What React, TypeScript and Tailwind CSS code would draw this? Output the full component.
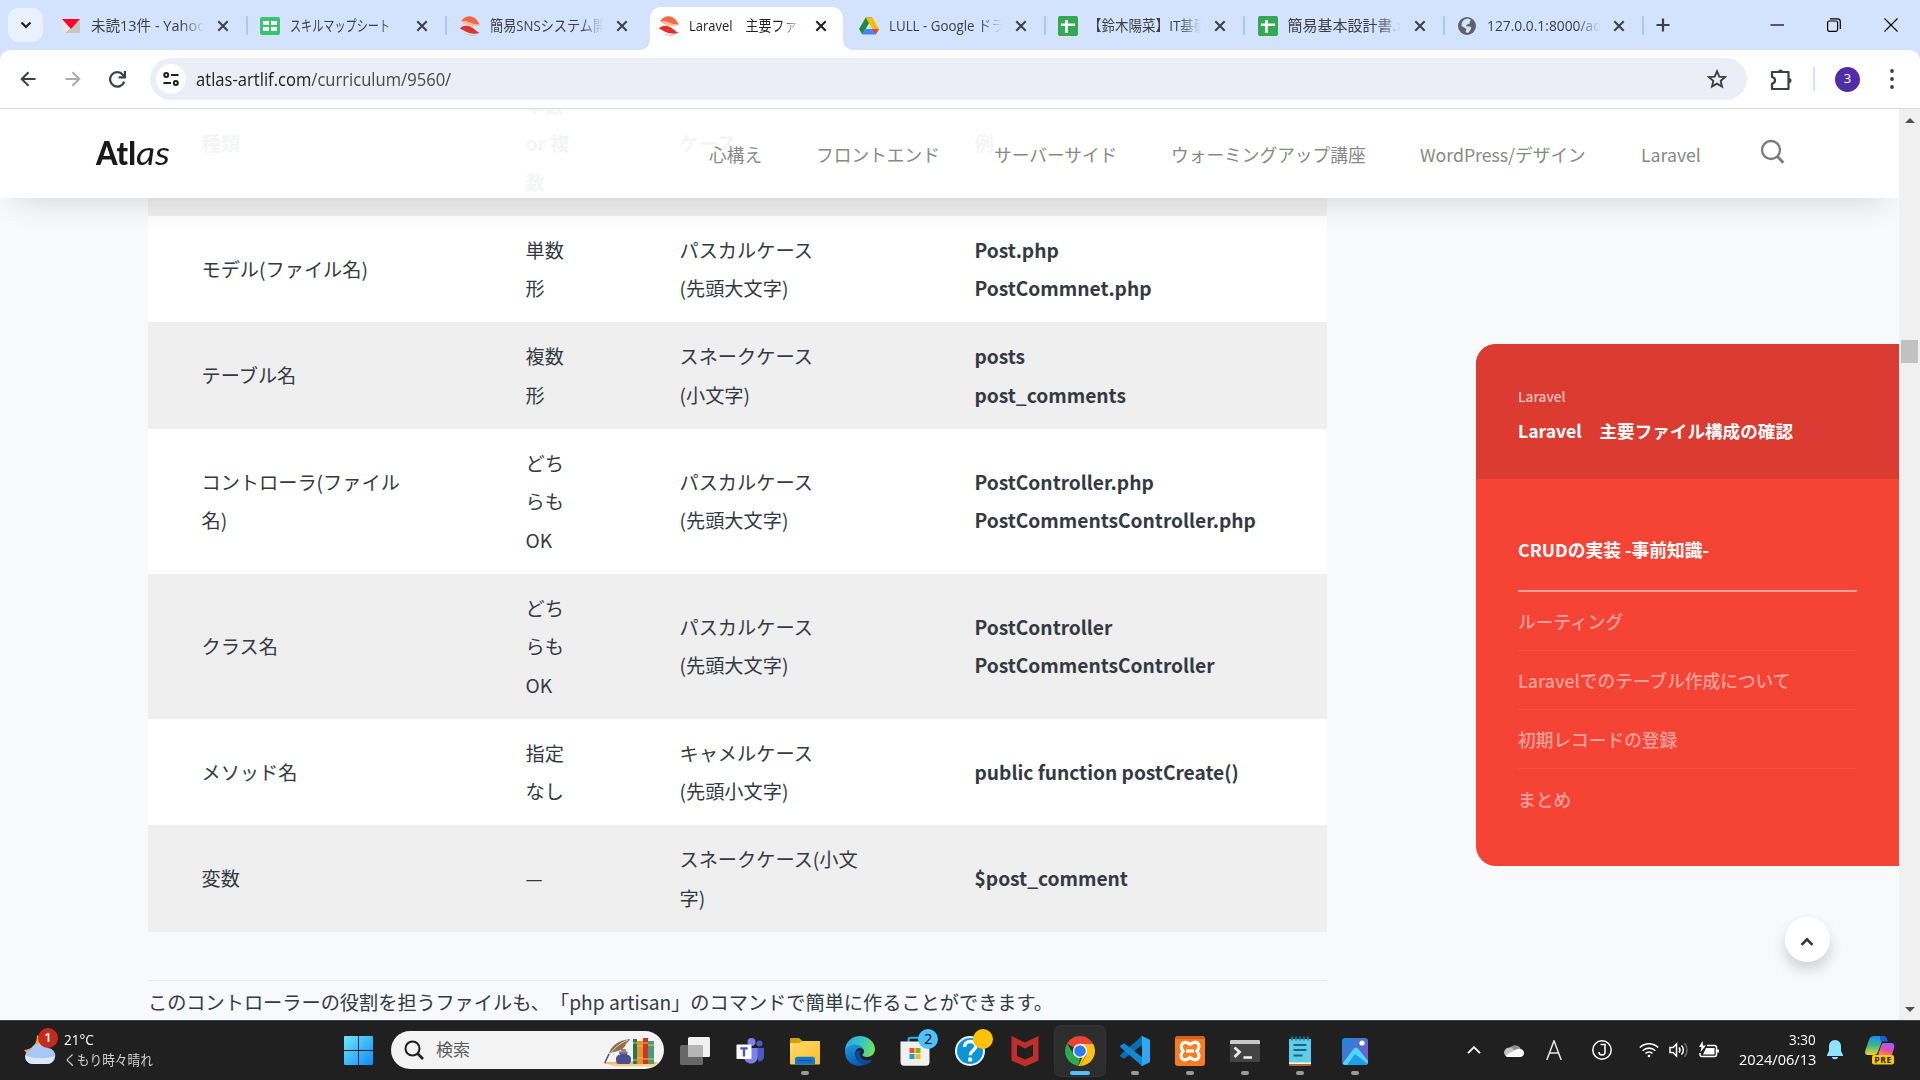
import React, { useLayoutEffect, useRef, useState } from "react";

const JP = "font-['Noto_Sans_CJK_JP',sans-serif]";
const UI = "font-['Open_Sans','Noto_Sans_CJK_JP',sans-serif]";

/* Condenses or widens a single line of text to a given advance width. */
function Fit({ w, className = "", children }: { w: number; className?: string; children: React.ReactNode }) {
  const ref = useRef<HTMLSpanElement>(null);
  const [k, setK] = useState(1);
  useLayoutEffect(() => {
    const measure = () => {
      if (ref.current) setK(w / ref.current.offsetWidth);
    };
    measure();
    document.fonts?.ready.then(measure);
  }, [w]);
  return (
    <span className="block" style={{ width: w }}>
      <span ref={ref} className={"inline-block origin-left whitespace-pre " + className} style={{ transform: `scaleX(${k})` }}>
        {children}
      </span>
    </span>
  );
}

/* ---------- Favicons ---------- */
const YahooIcon = () => (
  <svg viewBox="0 0 20 20" className="size-5">
    <path d="M1 3h18v14H1z" fill="#e9e6e0" />
    <path d="M19 4v13H4z" fill="#c9c6bf" />
    <path d="M1 3h18l-9 10z" fill="#ff0033" />
  </svg>
);
const SheetGridIcon = () => (
  <svg viewBox="0 0 20 20" className="size-5">
    <rect width="20" height="18" y="1" rx="2" fill="#37c56f" />
    <path d="M3 5h6v4H3zM11 5h6v4h-6zM3 11h6v4H3zM11 11h6v4h-6z" fill="#fff" />
  </svg>
);
const SheetPlusIcon = () => (
  <svg viewBox="0 0 20 20" className="size-5">
    <rect width="20" height="20" rx="2" fill="#34a853" />
    <path d="M7.200 4h2.600v3.400H17v2.500H9.800V17H7.200V9.900H3V7.400h4.200z" fill="#fff" />
  </svg>
);
const SushiIcon = () => (
  <svg viewBox="0 0 20 20" className="size-5">
    <path d="M3 16c4 3 9 3.500 15 1.500L15 19.500c-4 1-9 .3-12-3.500z" fill="#cfc4c0" />
    <path d="M1 5.500C4 .5 9-.5 13 1c4 1.500 5 5 7 7.500-4 .5-6-.3-9-1.500-3.500-1.500-6-1.500-10-1.500z" fill="#f26a45" />
    <path d="M1 5.500c5-.5 7 .2 10 1.500s5 2 9 1.500c-4 2-9 1.800-13 .2-2.500-1-4-2-6-3.200z" fill="#f9b79b" />
    <path d="M0 12.500C2 9.500 7 9 11 11s5.500 5 9 5.800c-5 1.700-10 1-14-1-2.300-1.200-4-2.300-6-3.300z" fill="#e2302e" />
  </svg>
);
const DriveIcon = () => (
  <svg viewBox="0 0 20 18" className="h-[18px] w-5">
    <path d="M6.700.5h6.600L6.700 12 3.300 17.500 0 12z" fill="#1e8e3e" />
    <path d="M6.700.5h6.600L20 12h-6.600z" fill="#fbbc04" />
    <path d="M3.300 17.500 6.700 12H20l-3.300 5.500z" fill="#4285f4" />
    <path d="M20 12h-6.600l3.300 5.500z" fill="#ea4335" />
  </svg>
);
const GlobeIcon = () => (
  <svg viewBox="0 0 20 20" className="size-5">
    <circle cx="10" cy="10" r="9" fill="#5f6368" />
    <path d="M8.500 3c2.500-.8 4.500 0 5.500 1l-1.500 2 .5 1.500-3 1-1 1.700 4 .3c1.200.5 1.500 1.500 1 2.500l-2.500 3.700c-1.500.3-2.500 0-3-1l1-2.700-5-3c-.2-3 1-5.800 4-7z" fill="#d3e3fd" />
  </svg>
);

const tabs = [
  { icon: <YahooIcon />, title: "未読13件 - Yahoo!", w: 119, divider: true },
  { icon: <SheetGridIcon />, title: "スキルマップシート", w: 100, divider: true },
  { icon: <SushiIcon />, title: "簡易SNSシステム開発", w: 129 },
  { icon: <SushiIcon />, title: "Laravel　主要ファイル", w: 134, active: true },
  { icon: <DriveIcon />, title: "LULL - Google ドライブ", w: 142, divider: true },
  { icon: <SheetPlusIcon />, title: "【鈴木陽菜】IT基礎", w: 119, divider: true },
  { icon: <SheetPlusIcon />, title: "簡易基本設計書.xlsx", w: 136, divider: true },
  { icon: <GlobeIcon />, title: "127.0.0.1:8000/added", w: 139, divider: true },
];

const Cross = () => (
  <svg viewBox="0 0 12 12" className="size-3" fill="none" stroke="currentColor" strokeWidth="2">
    <path d="M1.300 1.300l9.400 9.400M10.700 1.300l-9.400 9.400" />
  </svg>
);

function TabStrip() {
  return (
    <div className={"flex h-[50px] shrink-0 items-end bg-[#d3e3fd] text-[15px] text-[#3c4043] " + UI}>
      <button className="mb-2 ml-2 flex h-[34px] w-[35px] items-center justify-center rounded-[11px] bg-[#eaf1fe]">
        <svg viewBox="0 0 12 8" className="h-2 w-3" fill="none" stroke="#1f1f1f" strokeWidth="2.200">
          <path d="M1.500 1.500 6 6l4.500-4.500" />
        </svg>
      </button>
      <div className="ml-[6px] flex h-[43px]">
        {tabs.map((t, i) => (
          <div
            key={i}
            className={"relative flex h-[43px] w-[199.500px] items-center pb-[6px] pl-[11.500px] " + (t.active ? "text-[#1f1f1f]" : "")}
          >
            {t.active && (
              <svg viewBox="0 0 217 43" className="absolute top-0 -left-[9px] h-[43px] w-[215px]" preserveAspectRatio="none">
                <path d="M0 43c7 0 11-4 11-11V12C11 5 15 0 23 0h171c8 0 12 5 12 12v20c0 7 4 11 11 11z" fill="#fff" />
              </svg>
            )}
            <div className="relative flex w-5 items-center">{t.icon}</div>
            <div className="relative ml-[10px] w-[113px] overflow-hidden mask-r-from-80%">
              <Fit w={t.w}>{t.title}</Fit>
            </div>
            <div className="relative ml-[13px]">
              <Cross />
            </div>
            {t.divider && <i className="absolute top-[9px] right-px h-[19px] w-[2px] rounded bg-[#a8c7fa]" />}
          </div>
        ))}
      </div>
      <svg viewBox="0 0 14 14" className="mb-[18px] ml-[11px] size-[14px]" fill="none" stroke="#3c4043" strokeWidth="2.200">
        <path d="M7 .5v13M.5 7h13" />
      </svg>
      <div className="mr-[22px] mb-[18px] ml-auto flex items-center gap-[43px] text-black">
        <svg viewBox="0 0 14 14" className="size-[14px]" stroke="currentColor" strokeWidth="1.200">
          <path d="M.5 7H14" />
        </svg>
        <svg viewBox="0 0 14 14" className="size-[14px]" fill="none" stroke="currentColor" strokeWidth="1.200">
          <rect x=".6" y="3" width="10" height="10.300" rx="1.800" />
          <path d="M3 .9h7.500a2.800 2.800 0 0 1 2.800 2.800V11" />
        </svg>
        <svg viewBox="0 0 14 14" className="size-[14px]" fill="none" stroke="currentColor" strokeWidth="1.200">
          <path d="M.5.5l13 13M13.500.5l-13 13" />
        </svg>
      </div>
    </div>
  );
}

function Toolbar() {
  return (
    <div className="shrink-0 bg-[#d3e3fd]">
      <div className={"flex h-[59px] items-center rounded-t-[10px] border-b border-[#dcdcdc] bg-white text-[#3c4043] " + UI}>
        <svg viewBox="0 0 16 16" className="ml-5 size-4" fill="none" stroke="#3c4043" strokeWidth="2">
          <path d="M15.500 8H2M8.500 1.200 1.700 8l6.800 6.800" />
        </svg>
        <svg viewBox="0 0 16 16" className="ml-[29px] size-4" fill="none" stroke="#a9abad" strokeWidth="2">
          <path d="M.5 8H14M7.500 1.200 14.300 8l-6.800 6.800" />
        </svg>
        <svg viewBox="0 0 16 16" className="ml-[28px] size-[17px]" fill="none" stroke="#3c4043" strokeWidth="2.100">
          <path d="M14.300 10A6.800 6.800 0 1 1 13 3.500L14.500 5" />
          <path d="M15 0v6H9" />
        </svg>
        <div className="ml-6 flex h-[42px] w-[1597px] items-center rounded-full bg-[#ebeef7]">
          <div className="ml-[6px] flex size-[30px] items-center justify-center rounded-full bg-white">
            <svg viewBox="0 0 16 14" className="h-[14px] w-4" fill="none" stroke="#1f1f1f" strokeWidth="2">
              <circle cx="3.200" cy="3" r="2" />
              <path d="M8 3h7.500M.5 11H8" />
              <circle cx="12.800" cy="11" r="2" />
            </svg>
          </div>
          <div className="ml-[10px] text-[17.500px]">
            <Fit w={255}>
              <span className="text-[#202124]">atlas-artlif.com</span>
              <span className="text-[#474a4d]">/curriculum/9560/</span>
            </Fit>
          </div>
          <svg viewBox="0 0 20 20" className="mr-5 ml-auto size-5" fill="none" stroke="#3c4043" strokeWidth="1.900">
            <path d="M10 2.200l2.300 5.400 5.800.5-4.400 3.800 1.300 5.700-5-3-5 3 1.300-5.700L1.900 8.100l5.800-.5z" />
          </svg>
        </div>
        <svg viewBox="0 0 22 24" className="mb-px ml-[23px] h-6 w-[22px]" fill="none" stroke="#3c4043" strokeWidth="2.200">
          <path d="M2 5h16.500v17H2v-5.500c4-.5 4-6 0-6.500z" strokeLinejoin="round" />
          <path d="M8 4.500a2.600 2.600 0 0 1 5 0zM19 11a2.400 2.400 0 0 1 0 5z" fill="#3c4043" stroke="none" />
        </svg>
        <i className="ml-[21px] h-6 w-[2px] bg-[#d3e3fd]" />
        <div className="ml-5 flex size-[25px] items-center justify-center rounded-full bg-[#512da8] text-[13px] text-white">3</div>
        <svg viewBox="0 0 4 20" className="ml-[30px] h-[20px] w-1" fill="#3c4043">
          <circle cx="2" cy="2" r="1.900" />
          <circle cx="2" cy="10" r="1.900" />
          <circle cx="2" cy="18" r="1.900" />
        </svg>
      </div>
    </div>
  );
}

/* ---------- Page ---------- */
const navItems = [
  { t: "心構え", c: "w-[107px]" },
  { t: "フロントエンド", c: "w-[178px]" },
  { t: "サーバーサイド", c: "w-[177px]" },
  { t: "ウォーミングアップ講座", c: "w-[249px]" },
  { t: "WordPress/デザイン", c: "w-[221px]" },
  { t: "Laravel", c: "w-[120px]" },
];

function SiteHeader() {
  return (
    <header className="absolute inset-x-0 top-0 z-10 flex h-[89px] items-center bg-white/95 shadow-[0_20px_30px_-14px_rgba(0,0,0,0.12)]">
      <div className="ml-24 flex w-[613px] items-baseline pb-[3px] font-['Lato',sans-serif] text-[33px] leading-none text-[#1a1a1a]">
        <Fit w={40} className="font-black">
          Atl
        </Fit>
        <Fit w={34} className="font-normal italic">
          as
        </Fit>
      </div>
      <nav className="flex pt-px text-[17.700px] text-[#888]">
        {navItems.map((n) => (
          <a key={n.t} className={n.c + " whitespace-nowrap"}>
            {n.t}
          </a>
        ))}
      </nav>
      <svg viewBox="0 0 24 24" className="mb-[3px] size-6 overflow-visible" fill="none" stroke="#7a7a7a" strokeWidth="2.300">
        <circle cx="10" cy="10" r="9" />
        <path d="M16.500 16.500l5.800 6.200" strokeWidth="2.800" />
      </svg>
    </header>
  );
}

const rows = [
  { name: ["モデル(ファイル名)"], num: ["単数", "形"], kase: ["パスカルケース", "(先頭大文字)"], ex: ["Post.php", "PostCommnet.php"], h: "h-[106.400px]" },
  { name: ["テーブル名"], num: ["複数", "形"], kase: ["スネークケース", "(小文字)"], ex: ["posts", "post_comments"], h: "h-[106.600px]" },
  { name: ["コントローラ(ファイル", "名)"], num: ["どち", "らも", "OK"], kase: ["パスカルケース", "(先頭大文字)"], ex: ["PostController.php", "PostCommentsController.php"], h: "h-[145px]" },
  { name: ["クラス名"], num: ["どち", "らも", "OK"], kase: ["パスカルケース", "(先頭大文字)"], ex: ["PostController", "PostCommentsController"], h: "h-[145px]" },
  { name: ["メソッド名"], num: ["指定", "なし"], kase: ["キャメルケース", "(先頭小文字)"], ex: ["public function postCreate()"], h: "h-[106.400px]" },
  { name: ["変数"], num: ["—"], kase: ["スネークケース(小文", "字)"], ex: ["$post_comment"], h: "h-[106.400px]" },
];

const Lines = ({ t }: { t: string[] }) => (
  <div>
    {t.map((l) => (
      <div key={l} className="whitespace-nowrap">
        {l}
      </div>
    ))}
  </div>
);

const rowGrid = "grid grid-cols-[324px_154px_295px_1fr] items-center pl-[53.500px]";

function Article() {
  return (
    <main className="ml-[148px] w-[1179px] shrink-0 text-[19.200px] leading-[38.400px] text-[#333a42] [text-spacing-trim:space-all]">
      <div className={rowGrid + " -mt-[38px] h-[145px] bg-[#efefef] font-bold"}>
        <Lines t={["種類"]} />
        <Lines t={["単数", "or 複", "数"]} />
        <Lines t={["ケース"]} />
        <Lines t={["例"]} />
      </div>
      {rows.map((r, i) => (
        <div key={i} className={rowGrid + " " + r.h + " " + (i % 2 ? "bg-[#efefef]" : "bg-white")}>
          <Lines t={r.name} />
          <Lines t={r.num} />
          <Lines t={r.kase} />
          <div className="font-bold tracking-[-0.02px]">
            <Lines t={r.ex} />
          </div>
        </div>
      ))}
      <hr className="mt-[48px] border-[#e9ebed]" />
      <p className="mt-[2.500px] whitespace-nowrap">
        このコントローラーの役割を担うファイルも、「php artisan」のコマンドで簡単に作ることができます。
      </p>
    </main>
  );
}

function SideCard() {
  return (
    <aside className="mt-[235px] ml-[149px] h-[522px] w-[423px] shrink-0 overflow-hidden rounded-l-[20px] bg-[#f54336] text-[17.700px] font-medium text-white/50">
      <div className="h-[135px] bg-[#db3b31] px-[42px] pt-[41px]">
        <div className="text-[13.600px] leading-[22px] text-white/70">Laravel</div>
        <div className="mt-[10px] text-[17.600px] leading-7 font-bold whitespace-nowrap text-white">Laravel　主要ファイル構成の確認</div>
      </div>
      <div className="px-[42px] pt-[54px]">
        <div className="h-[59px] border-b-2 border-white/50 text-[17.760px] leading-[32px] font-bold text-white">CRUDの実装 -事前知識-</div>
        {["ルーティング", "Laravelでのテーブル作成について", "初期レコードの登録", "まとめ"].map((s) => (
          <div key={s} className="flex h-[59px] items-center border-b border-white/[0.07] pt-[1.500px] last:border-0">
            {s}
          </div>
        ))}
      </div>
    </aside>
  );
}

function Scrollbar() {
  return (
    <div className="ml-auto flex w-[21px] shrink-0 flex-col items-center bg-[#f0f0f0]">
      <svg viewBox="0 0 10 5" className="mt-[9px] h-[5px] w-[10px]">
        <path d="M0 5 5 0l5 5z" fill="#505050" />
      </svg>
      <div className="mt-[217px] h-[23px] w-[17px] bg-[#c1c1c1]" />
      <svg viewBox="0 0 10 5" className="mt-auto mb-[8px] h-[5px] w-[10px]">
        <path d="M0 0l5 5 5-5z" fill="#505050" />
      </svg>
    </div>
  );
}

/* ---------- Taskbar ---------- */
const TaskViewIcon = () => (
  <svg viewBox="0 0 32 32" className="size-8">
    <rect x="9" y="2" width="22" height="20" rx="1.500" fill="#f1f1f1" />
    <rect x="1" y="10" width="23" height="20" rx="1.500" fill="#676767" />
    <path d="M9 10h13.500c1 0 1.500.5 1.500 1.500V22H9z" fill="#b5b5b5" />
  </svg>
);
const TeamsIcon = () => (
  <svg viewBox="0 0 32 32" className="size-8">
    <circle cx="25.500" cy="8.500" r="3" fill="#4f56c5" />
    <path d="M20 13h10v8c0 4-2.500 5.500-5.500 5.500z" fill="#4f56c5" />
    <circle cx="17.500" cy="7" r="4" fill="#7b83eb" />
    <path d="M10 13h13.500v9c0 4-3 6.500-6.500 6.500S10 26 10 22z" fill="#7b83eb" />
    <rect x="2.500" y="9.500" width="15" height="14.500" rx=".8" fill="#fff" />
    <path d="M6.300 12.300h7.400v2.200h-2.500v7H8.800v-7H6.300z" fill="#4b53bc" />
  </svg>
);
const FolderIcon = () => (
  <svg viewBox="0 0 32 32" className="size-8">
    <defs>
      <linearGradient id="folder" x1="0" y1="0" x2="1" y2="1">
        <stop offset="0" stopColor="#ffdc6e" />
        <stop offset="1" stopColor="#fdbd2c" />
      </linearGradient>
    </defs>
    <path d="M1 4.500C1 3.500 1.500 3 2.500 3H10l3.500 3H31v6H1z" fill="#dd9f00" />
    <path d="M1 8h9l3.500-2H29.500c1 0 1.500.5 1.500 1.500V28c0 1-.5 1.500-1.500 1.500h-27C1.500 29.500 1 29 1 28z" fill="url(#folder)" />
    <path d="M6 29.500V24a2.200 2.200 0 0 1 2.200-2.200h15.600A2.200 2.200 0 0 1 26 24v5.500z" fill="#1278cf" />
    <path d="M9.500 25.500h13" stroke="#0b4f94" strokeWidth="1.200" />
  </svg>
);
const EdgeIcon = () => (
  <svg viewBox="0 0 32 32" className="size-8">
    <defs>
      <linearGradient id="edgeTop" x1="0" y1="0.300" x2="1" y2="0.600">
        <stop offset="0" stopColor="#2fa9dc" />
        <stop offset=".5" stopColor="#37c6c4" />
        <stop offset="1" stopColor="#74e05c" />
      </linearGradient>
      <linearGradient id="edgeBase" x1="0" y1="0" x2="0.400" y2="1">
        <stop offset="0" stopColor="#1c9de0" />
        <stop offset="1" stopColor="#0a5cb5" />
      </linearGradient>
    </defs>
    <path d="M1 16C1 7 8 1 16 1s15 6 15 13c0 5-4 8-8 8-3 0-5-1-4.500-2.500C20 18 20 17 20 16c0-2-3-5-8-5-6 0-10 3-11 5z" fill="url(#edgeTop)" />
    <path d="M1 16c1-4 5-6.500 9.500-6.500 6 0 9.500 4 9.500 6.500 0-1-2-3-4-3-4 0-6 5-4 10 1.500 4 6 6 10 5.500C14 34 1 29.500 1 16z" fill="url(#edgeBase)" />
    <path d="M12 17.500c-1 6 3 12 9 12 3 0 6-2.500 7.500-5.500-4 2.500-10 1.500-12-2.500-.8-2-.5-4 .5-5.500-2-1-4.500-.5-5 1.500z" fill="#0c4a97" />
  </svg>
);
const StoreIcon = () => (
  <svg viewBox="0 0 32 32" className="size-8">
    <path d="M9.500 8V4.500C9.500 3 10 2.700 11.500 2.700H21" fill="none" stroke="#2bb3f0" strokeWidth="2" />
    <path d="M1.500 6.500h29V27c0 2-1 3.800-3.500 3.800H5C2.500 30.800 1.500 29 1.500 27z" fill="#f0f0f0" />
    <path d="M10.500 13h5v5h-5z" fill="#f25022" />
    <path d="M16.500 13h5v5h-5z" fill="#7fba00" />
    <path d="M10.500 19h5v5h-5z" fill="#00a4ef" />
    <path d="M16.500 19h5v5h-5z" fill="#ffb900" />
  </svg>
);
const HelpIcon = () => (
  <svg viewBox="0 0 32 32" className="size-8">
    <circle cx="16" cy="16" r="14" fill="#0b95d9" stroke="#e9f6fd" strokeWidth="2" />
    <path d="M10.500 12c0-3.500 2.500-5.500 5.700-5.500 3.300 0 5.600 2 5.600 4.700 0 4-5.600 4.600-5.600 9" fill="none" stroke="#fff" strokeWidth="3.400" />
    <circle cx="16.100" cy="24.500" r="2.200" fill="#fff" />
  </svg>
);
const ShieldIcon = () => (
  <svg viewBox="0 0 32 32" className="size-8">
    <path d="M2.500 1 16 7.500 29.500 1v24.500L16 31.500 2.500 25.500z" fill="#c12d2b" />
    <path d="M8 9.500l8 4 8-4V21l-8 3.500L8 21z" fill="#202020" />
  </svg>
);
const ChromeIcon = () => (
  <svg viewBox="0 0 32 32" className="size-8">
    <path d="M16 16 3 8.500A15 15 0 0 1 29 8.500z" fill="#ea4335" />
    <path d="M16 9h13.300A15 15 0 0 1 16 31l6.500-11.500z" fill="#fbc116" />
    <path d="M3 8.500 9.800 19.500 16 23l-1.500 7.900A15 15 0 0 1 3 8.500z" fill="#2da94f" />
    <path d="M14.500 30.900 18 22.800l4.200-3.200L16 31z" fill="#fbc116" />
    <circle cx="16" cy="16" r="7.200" fill="#fff" />
    <circle cx="16" cy="16" r="5.800" fill="#2f7cf0" />
  </svg>
);
const CodeIcon = () => (
  <svg viewBox="0 0 32 32" className="size-8">
    <path d="M23 1v9L5 23.800 1.500 21.500c-.5-.5-.5-1.200 0-1.700z" fill="#0a6db8" />
    <path d="M1.500 10.500 5 8.200 23 22v9L1.500 12.200c-.5-.5-.5-1.200 0-1.700z" fill="#1487d4" />
    <path d="M23 1l7 3.300c.6.300 1 .8 1 1.500v20.400c0 .7-.4 1.200-1 1.500L23 31c-.8.200-1.200 0-1.500-.3.800.4 1.500 0 1.500-1V2.300c0-1-.7-1.400-1.500-1 .3-.3.700-.5 1.500-.3z" fill="#2fa8f2" />
  </svg>
);
const XamppIcon = () => (
  <svg viewBox="0 0 32 32" className="size-8">
    <rect x="1" y="1" width="30" height="30" rx="3" fill="#f97b22" />
    <path d="M1 4a3 3 0 0 1 3-3h24a3 3 0 0 1 3 3z" fill="#d9601a" />
    <path d="M9 8c3-2 5 0 7 1.500C18 8 21 6 23.500 8s1.500 5.500-.5 8c2 2.500 3 6 .5 8S18 24 16 22.500C14 24 11 26 8.500 24S7 18.500 9 16C7 13.500 6.500 10 9 8z" fill="none" stroke="#fff" strokeWidth="3.200" />
    <path d="M12 16h8" stroke="#fff" strokeWidth="3.200" />
  </svg>
);
const TerminalIcon = () => (
  <svg viewBox="0 0 32 32" className="size-8">
    <rect x="1" y="5" width="30" height="22" rx="1.500" fill="#444" />
    <path d="M1 9V6.500C1 5.500 1.500 5 2.500 5h27c1 0 1.500.5 1.500 1.500V9z" fill="#c9c9c9" />
    <path d="M5.500 12.500l5 4.500-5 5" fill="none" stroke="#e8e8e8" strokeWidth="2.800" />
    <path d="M14.500 22.500h8.500" stroke="#fff" strokeWidth="2.400" />
  </svg>
);
const NotepadIcon = () => (
  <svg viewBox="0 0 32 32" className="size-8">
    <rect x="5" y="26" width="22" height="5" rx="1" fill="#b9642a" />
    <path d="M5 4h22v24H5z" fill="#64cbe6" />
    <path d="M5 27.500h22V29H5z" fill="#fff" />
    <path d="M9.500 10h13M9.500 15h13M9.500 20.500h9" stroke="#0b6a8c" strokeWidth="2" />
    <path d="M8 1.500v4M12 1.500v4M16 1.500v4M20 1.500v4M24 1.500v4" stroke="#12809f" strokeWidth="1.800" />
  </svg>
);
const PhotosIcon = () => (
  <svg viewBox="0 0 32 32" className="size-8">
    <defs>
      <linearGradient id="sky" x1="0" y1="0" x2="1" y2="1">
        <stop offset="0" stopColor="#1789dc" />
        <stop offset="1" stopColor="#8e55c4" />
      </linearGradient>
    </defs>
    <rect x="3" y="3" width="26" height="27" rx="3" fill="url(#sky)" />
    <path d="M4 28 14.500 14c1.500-2 3.500-2 5 0L29 26c0 3-1 4-3 4H6c-1 0-2-1-2-2z" fill="#4fd6f8" />
    <path d="M16 19 28.500 28.500C28 29.500 27 30 26 30H8z" fill="#1e9de8" />
    <circle cx="23" cy="8" r="2.600" fill="#fff" />
  </svg>
);

const apps: { icon: React.ReactNode; dot?: boolean; active?: boolean; badge?: React.ReactNode }[] = [
  { icon: <TaskViewIcon /> },
  { icon: <TeamsIcon /> },
  { icon: <FolderIcon />, dot: true },
  { icon: <EdgeIcon /> },
  {
    icon: <StoreIcon />,
    badge: (
      <b className="absolute top-[3px] right-[2px] flex size-5 items-center justify-center rounded-full bg-[#4cc2ff] text-[14px] font-normal text-black">2</b>
    ),
  },
  { icon: <HelpIcon />, badge: <b className="absolute top-[3px] right-[2px] size-5 rounded-full bg-[#ffc107]" /> },
  { icon: <ShieldIcon /> },
  { icon: <ChromeIcon />, active: true },
  { icon: <CodeIcon />, dot: true },
  { icon: <XamppIcon />, dot: true },
  { icon: <TerminalIcon />, dot: true },
  { icon: <NotepadIcon />, dot: true },
  { icon: <PhotosIcon />, dot: true },
];

function Taskbar() {
  return (
    <footer className={"flex h-[60px] shrink-0 items-center border-t border-[#3c4246] bg-[#202020] text-[14px] text-white " + UI}>
      <div className="relative ml-6 h-10 w-10">
        <svg viewBox="0 0 40 40" className="size-10">
          <path d="M13 4c0 9-4 14-13 15 3 5 9 7 15 4s8-12-2-19z" fill="#f5a524" />
          <path d="M8 33a7.500 7.500 0 0 1-1-14.800A9.500 9.500 0 0 1 24 17a8 8 0 0 1-1.500 16z" fill="#a9c6f5" />
          <path d="M8 33a7.500 7.500 0 0 1-6.500-9c6 4 22 4 29 1-.5 5-4 8-8 8z" fill="#dbe8fd" />
        </svg>
        <b className="absolute -top-[3px] left-[14px] flex size-5 items-center justify-center rounded-full bg-[#c42b1c] text-[13px] font-semibold">1</b>
      </div>
      <div className="w-[280px] pb-[2px] leading-[20px]">
        <Fit w={30}>21°C</Fit>
        <Fit w={89} className="text-[#d0d0d0]">
          くもり時々晴れ
        </Fit>
      </div>
      <svg viewBox="0 0 29 29" className="size-[29px]">
        <defs>
          <linearGradient id="win" x1="0" y1="0" x2="1" y2="1">
            <stop offset="0" stopColor="#6fe6ff" />
            <stop offset="1" stopColor="#0a8dfa" />
          </linearGradient>
        </defs>
        <path d="M0 1a1 1 0 0 1 1-1h13v14H0zM15 0h13a1 1 0 0 1 1 1v13H15zM0 15h14v14H1a1 1 0 0 1-1-1zM15 15h14v13a1 1 0 0 1-1 1H15z" fill="url(#win)" />
      </svg>
      <div className="mb-px ml-[18px] flex h-[38px] w-[273px] items-center overflow-hidden rounded-full bg-[#f3f3f3] text-[#5c5c5c]">
        <svg viewBox="0 0 20 20" className="ml-[13px] size-5" fill="none" stroke="#1f1f1f" strokeWidth="2">
          <circle cx="8.500" cy="8.500" r="7" />
          <path d="M13.500 13.500l5.500 5.500" strokeWidth="2.600" />
        </svg>
        <span className="ml-3 pb-px text-[17px]">検索</span>
        <svg viewBox="0 0 60 36" className="mr-[3px] ml-auto h-9 w-[60px]">
          <path d="M3 31h54l-5 3.500H14z" fill="#f6d68f" />
          <path d="M1 31c4-2 54-2 57 0-1 2-54 2-57 0z" fill="#e9bd6c" />
          <path d="M8 22C9 15 17 8 29 7c0 2-3 3-4 5-1 4-6 7-12 8-2 0-4 1-5 2z" fill="#8f7154" />
          <path d="M4 31C8 21 16 12 27 8" stroke="#e4cfae" fill="none" />
          <path d="M4 31c.5-2 2-5 4-9" stroke="#5a4a6c" strokeWidth="1.500" fill="none" />
          <path d="M19 20h7v2.500c3 1 4 2 4 4.500 0 4-1 5-3 5h-9c-2 0-3-1-3-5 0-2.500 1-3.500 4-4.500z" fill="#4c4d8e" />
          <path d="M18 19.500h8.500V22H18z" fill="#6c6db2" />
          <path d="M20 17h5v2.500h-5z" fill="#b97b3c" />
          <rect x="32" y="7" width="4" height="25" fill="#1f7a57" />
          <rect x="36" y="9" width="6" height="23" fill="#e8912f" />
          <rect x="42" y="6" width="5" height="26" fill="#c8372d" />
          <rect x="47" y="9" width="6" height="23" fill="#4d9a7b" />
          <path d="M32 11h4M32 28h4M36 14h6M36 26h6M42 11h5M42 27h5M47 13h6M47 27h6" stroke="#f2c14e" />
        </svg>
      </div>
      <div className="ml-1 flex">
        {apps.map((a, i) => (
          <div key={i} className="flex w-[54.950px] justify-center">
            <div
              className={
                "relative flex h-[50px] w-[50px] items-center justify-center rounded-md " +
                (a.active ? "bg-[#2d2d2d] ring-1 ring-[#353535]" : "")
              }
            >
              {a.icon}
              {a.badge}
              {a.dot && <i className="absolute bottom-px h-1 w-2 rounded-full bg-[#9a9a9a]" />}
              {a.active && <i className="absolute bottom-px h-1 w-5 rounded-full bg-[#4cc2ff]" />}
            </div>
          </div>
        ))}
      </div>
      <div className="mb-px ml-auto flex items-center">
        <svg viewBox="0 0 14 8" className="h-2 w-[14px]" fill="none" stroke="#fff" strokeWidth="1.800">
          <path d="M1 7.200 7 1.200l6 6" />
        </svg>
        <svg viewBox="0 0 20 14" className="ml-[23px] h-[14px] w-5">
          <path d="M5 7a6 5 0 0 1 11-2.500L17 7z" fill="#8f8f8f" />
          <path d="M4 13.500A4 4 0 0 1 1 7c2-3 6-3 8-1l6 5z" fill="#c4c4c4" />
          <path d="M1.500 12.500 12 6.500c4-2 8 .3 8 3.500 0 2.300-1.500 4-4 4H4c-1 0-2-.5-2.500-1.500z" fill="#fff" />
        </svg>
        <svg viewBox="0 0 16 20" className="ml-[22px] h-5 w-4" fill="none" stroke="#e8e8e8" strokeWidth="1.500">
          <path d="M.8 20 8 .8 15.200 20M3.500 13h9" />
        </svg>
        <svg viewBox="0 0 20 20" className="ml-[30px] size-5" fill="none" stroke="#fff" strokeWidth="1.500">
          <circle cx="10" cy="10" r="9.200" />
          <path d="M8.500 4.500h4.500V12c0 4-6 4-6 0" />
        </svg>
        <svg viewBox="0 0 20 16" className="ml-[27px] h-4 w-5" fill="none" stroke="#fff" strokeWidth="1.600">
          <path d="M.8 5.500a13 13 0 0 1 18.400 0M3.700 8.700a9 9 0 0 1 12.600 0M6.500 11.500a5 5 0 0 1 7 0" />
          <circle cx="10" cy="14" r="1.300" fill="#fff" stroke="none" />
        </svg>
        <svg viewBox="0 0 20 16" className="ml-[10px] h-4 w-5" fill="none" stroke="#fff" strokeWidth="1.500">
          <path d="M1 5.500h3L7.500 2v12L4 10.500H1z" />
          <path d="M10 5.500c1.200 1.500 1.200 3.500 0 5M12.500 3.500c2.500 2.500 2.500 6.500 0 9" />
          <path d="M15.500 1.200c3.500 4 3.500 9.600 0 13.600" stroke="#6b6b6b" />
        </svg>
        <svg viewBox="0 0 22 18" className="ml-[9px] h-[18px] w-[22px]" fill="none" stroke="#fff" strokeWidth="1.500">
          <path d="M9 4.500h7.500a2 2 0 0 1 2 2v7a2 2 0 0 1-2 2H4a2 2 0 0 1-2-2V12" />
          <path d="M19 8.500h2v3h-2z" fill="#fff" stroke="none" />
          <path d="M8 7h8.500v6.500H5z" fill="#fff" stroke="none" />
          <path d="M4.500 0 1 6h2.500L2.500 11 8 4.500H5z" fill="#fff" stroke="none" />
        </svg>
        <div className="ml-[19px] flex w-[77px] flex-col items-end leading-[20.500px]">
          <Fit w={27}>3:30</Fit>
          <Fit w={77}>2024/06/13</Fit>
        </div>
        <svg viewBox="0 0 16 20" className="ml-[11px] h-5 w-4" fill="#8fe3ff">
          <path d="M8 0c4 0 6 3 6 6.500V11l2 4v1H0v-1l2-4V6.500C2 3 4 0 8 0zM5 17h6c0 3-6 3-6 0z" />
        </svg>
        <svg viewBox="0 0 30 30" className="mr-[25px] ml-[22px] size-[30px] overflow-visible">
          <defs>
            <linearGradient id="copA" x1="0" y1="0" x2="0" y2="1">
              <stop offset="0" stopColor="#1c8df0" />
              <stop offset=".5" stopColor="#3bb887" />
              <stop offset="1" stopColor="#f3d02c" />
            </linearGradient>
            <linearGradient id="copB" x1="0.500" y1="0" x2="0" y2="1">
              <stop offset="0" stopColor="#a45cf0" />
              <stop offset=".5" stopColor="#e8509a" />
              <stop offset="1" stopColor="#ff9a4a" />
            </linearGradient>
          </defs>
          <path d="M9 1h9c3 0 3.500 2 4.500 5H17l-4 11c-1 2-2 3-4 3H3c-2.500 0-3.500-2-2.500-5L4 5c1-3 2.500-4 5-4z" fill="url(#copA)" />
          <path d="M15 1h3c3 0 3.500 2 4.500 5.500H17c-1 0-1.500-.5-2-2z" fill="#1a5fd8" />
          <path d="M19 8h7c3 0 4 2 3 5l-2 7H13l3-9c.5-2 1.500-3 3-3z" fill="url(#copB)" />
          <rect x="7" y="20" width="22" height="9.500" rx="2" fill="#ffc800" />
          <text x="18" y="27.800" textAnchor="middle" fontSize="8.500" fontWeight="700" fill="#1a1a1a" fontFamily="Open Sans" letterSpacing=".6">
            PRE
          </text>
        </svg>
      </div>
    </footer>
  );
}

export default function App() {
  return (
    <div className={"flex h-[1080px] w-[1920px] flex-col overflow-hidden bg-[#f7f9fb] " + JP}>
      <TabStrip />
      <Toolbar />
      <div className="flex h-[911px] overflow-hidden">
        <div className="relative flex w-[1899px] items-start self-stretch overflow-hidden bg-[#f7f9fb]">
          <SiteHeader />
          <Article />
          <SideCard />
          <button className="absolute top-[808px] left-[1784.500px] flex size-[45px] items-center justify-center rounded-full bg-white shadow-[0_8px_14px_rgba(0,0,0,0.16)]">
            <svg viewBox="0 0 14 9" className="mt-[3px] h-[9px] w-[14px]" fill="none" stroke="#333" strokeWidth="2.600">
              <path d="M1.500 7.800 7 2.300l5.500 5.500" />
            </svg>
          </button>
        </div>
        <Scrollbar />
      </div>
      <Taskbar />
    </div>
  );
}
